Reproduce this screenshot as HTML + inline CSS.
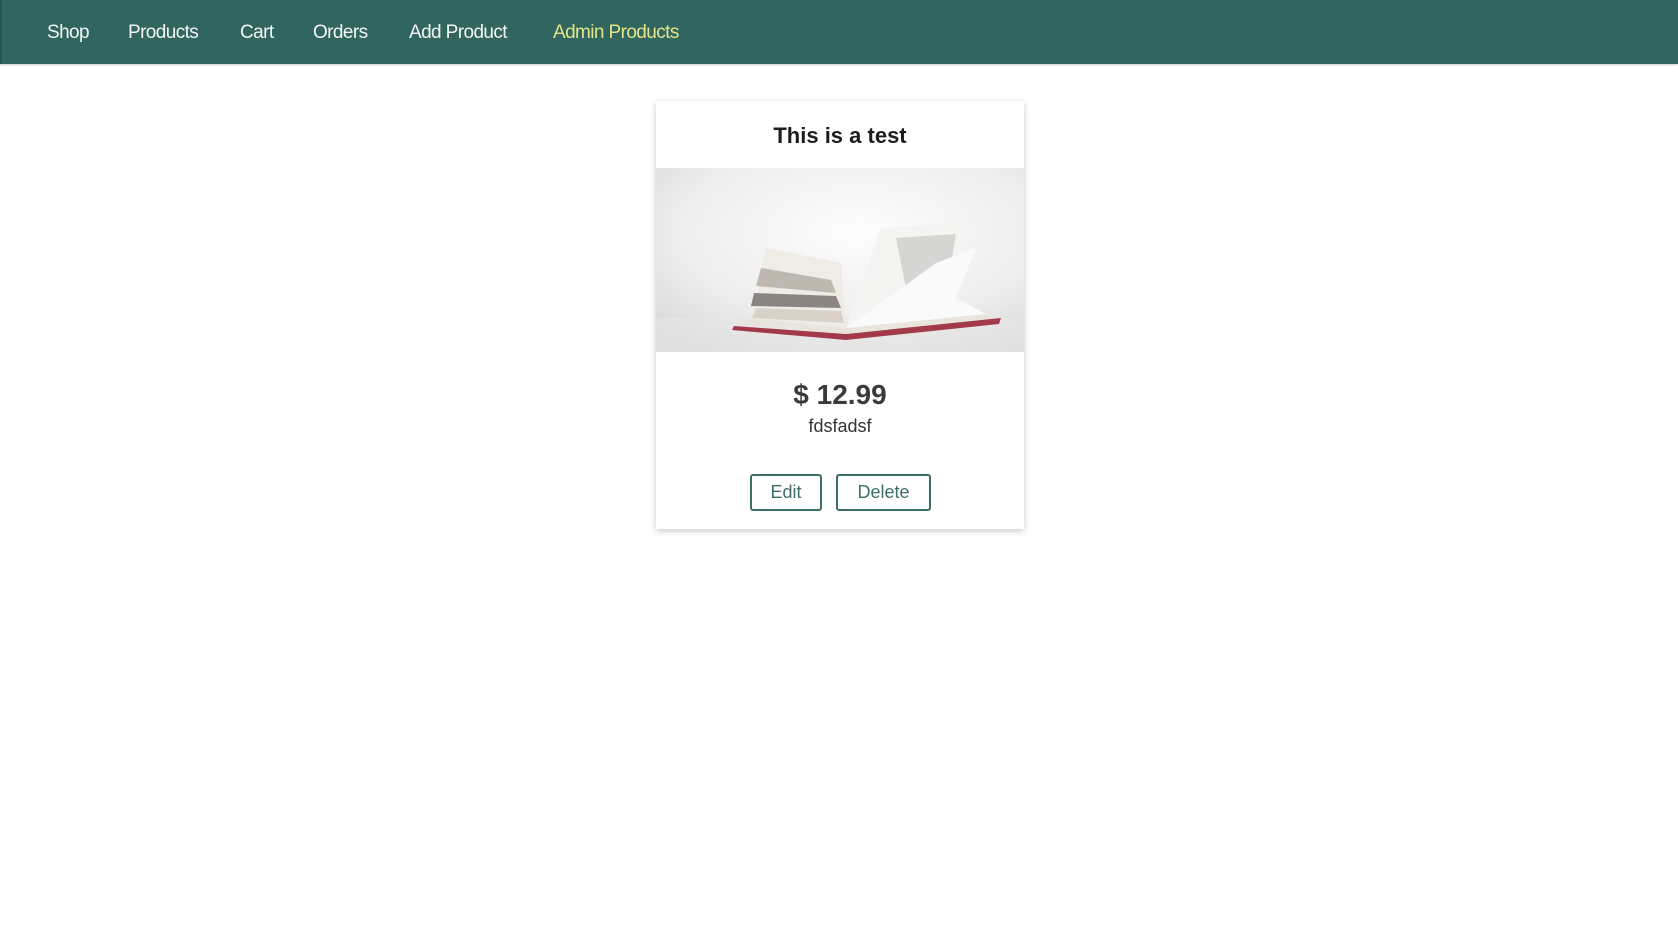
<!DOCTYPE html>
<html><head><meta charset="utf-8"><style>
*{box-sizing:border-box;margin:0;padding:0}
body{width:1678px;height:940px;background:#fff;font-family:"Liberation Sans",sans-serif;position:relative;overflow:hidden}
.nav{position:absolute;left:0;top:0;width:1678px;height:64px;background:#31655f;border-left:2px solid #285550;box-shadow:0 1px 2px rgba(0,0,0,.2)}
.nav a{position:absolute;top:22px;font-size:19px;color:#f2f5f4;text-decoration:none;letter-spacing:-0.6px}
.card{position:absolute;left:656px;top:101px;width:368px;height:428px;background:#fff;box-shadow:0 2px 6px rgba(0,0,0,.22)}
.title{position:absolute;top:22px;width:100%;text-align:center;font-weight:bold;font-size:22px;color:#1d1d1d}
.img{position:absolute;top:67px;left:0;width:368px;height:184px}
.price{position:absolute;top:278px;width:100%;text-align:center;font-weight:bold;font-size:28px;color:#3a3a3a}
.desc{position:absolute;top:315px;width:100%;text-align:center;font-size:18px;color:#333}
.btn{position:absolute;top:373px;height:37px;border:2px solid #3d6e69;border-radius:3px;font-size:18px;color:#3d6e69;text-align:center;line-height:33px}
</style></head><body>
<div class="nav">
<a style="left:45px">Shop</a>
<a style="left:126px">Products</a>
<a style="left:238px">Cart</a>
<a style="left:311px">Orders</a>
<a style="left:407px">Add Product</a>
<a style="left:551px;color:#e4e58a">Admin Products</a>
</div>
<div class="card">
<div class="title">This is a test</div>
<svg class="img" viewBox="0 0 368 184">
<defs><radialGradient id="g" cx="0.55" cy="0.35" r="0.8"><stop offset="0" stop-color="#fdfdfd"/><stop offset="0.6" stop-color="#eeeeee"/><stop offset="1" stop-color="#d6d6d6"/></radialGradient></defs>
<rect width="368" height="184" fill="url(#g)"/>
<rect y="150" width="368" height="34" fill="#e8e8e8" opacity=".5"/>
<path d="M78 158 L190 166 L345 150 L343 156 L190 172 L76 162Z" fill="#a23a4a"/>
<path d="M86 150 L190 160 L330 146 L340 150 L190 166 L80 156Z" fill="#e9e4dc"/>
<path d="M95 150 L110 80 L185 95 L190 160Z" fill="#efebe5"/>
<path d="M105 100 L175 112 L180 125 L100 118Z" fill="#bdb8b0"/>
<path d="M98 125 L180 128 L185 140 L95 138Z" fill="#8a8580"/>
<path d="M100 140 L185 143 L188 155 L96 150Z" fill="#d8d2c8"/>
<path d="M190 160 L225 60 L310 55 L300 100 L240 150Z" fill="#f4f4f2"/>
<path d="M240 70 L300 66 L295 95 L250 120Z" fill="#d5d5d3"/>
<path d="M190 160 L280 95 L320 80 L300 130 L330 146Z" fill="#fafafa"/>
</svg>
<div class="price">$ 12.99</div>
<div class="desc">fdsfadsf</div>
<div class="btn" style="left:94px;width:72px">Edit</div>
<div class="btn" style="left:180px;width:95px">Delete</div>
</div>
</body></html>
